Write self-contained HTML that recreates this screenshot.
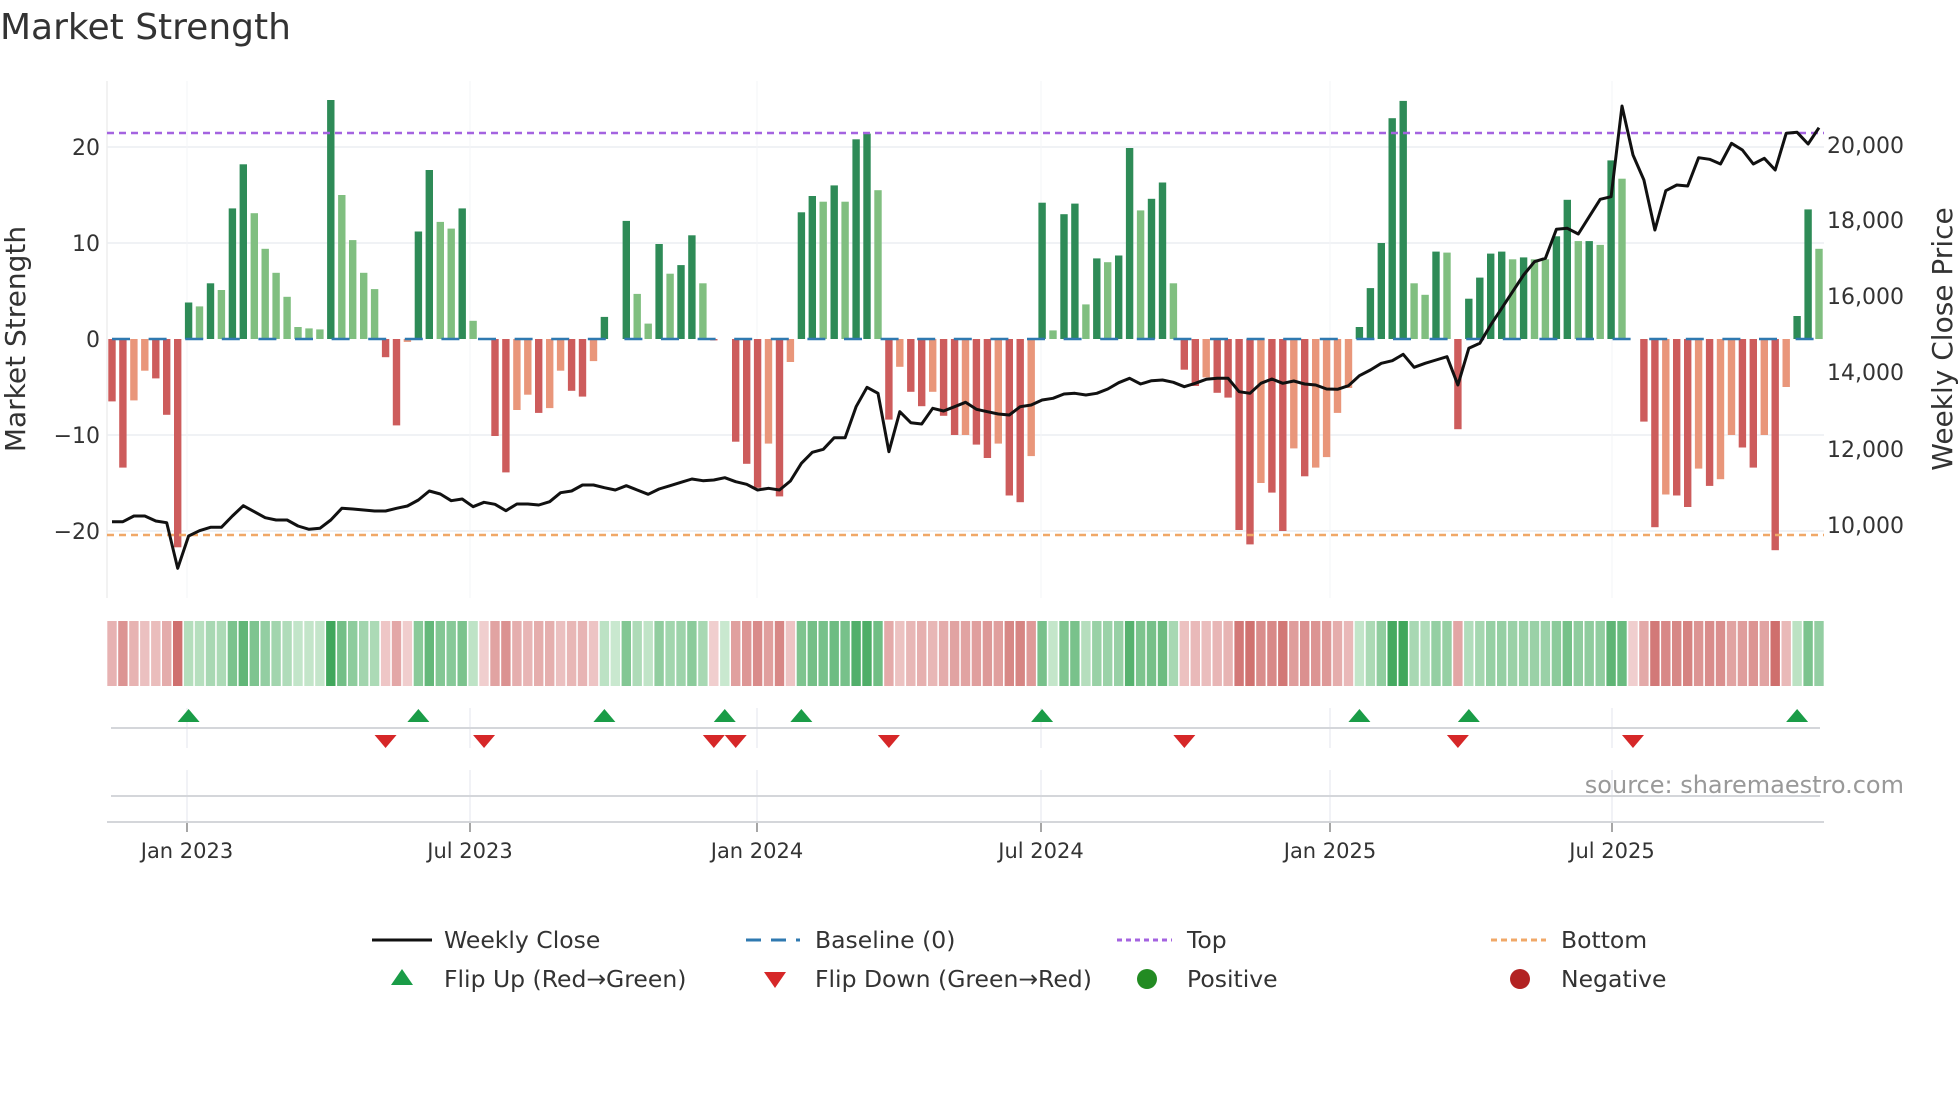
<!DOCTYPE html>
<html><head><meta charset="utf-8"><style>
html,body{margin:0;padding:0;background:#fff;width:1960px;height:1102px;overflow:hidden}
svg{display:block;font-family:"DejaVu Sans","Liberation Sans",sans-serif}
</style></head><body>
<svg id="s" width="1960" height="1102" viewBox="0 0 1960 1102" xmlns="http://www.w3.org/2000/svg">
<text x="0" y="39" font-size="36" fill="#333">Market Strength</text>
<g id="g"></g>
<text x="1904" y="793" font-size="24" fill="#999" text-anchor="end">source: sharemaestro.com</text>
<g font-size="21" fill="#333" text-anchor="middle">
<text x="187" y="858">Jan 2023</text><text x="470" y="858">Jul 2023</text><text x="757" y="858">Jan 2024</text>
<text x="1041" y="858">Jul 2024</text><text x="1330" y="858">Jan 2025</text><text x="1612" y="858">Jul 2025</text>
</g>
<g font-size="22" fill="#333" text-anchor="end">
<text x="100" y="155">20</text><text x="100" y="251">10</text><text x="100" y="347">0</text>
<text x="100" y="443">−10</text><text x="100" y="539">−20</text>
</g>
<g font-size="22" fill="#333">
<text x="1827" y="153">20,000</text><text x="1827" y="228">18,000</text><text x="1827" y="304">16,000</text>
<text x="1827" y="380">14,000</text><text x="1827" y="457">12,000</text><text x="1827" y="533">10,000</text>
</g>
<text transform="translate(25,339) rotate(-90)" font-size="28" fill="#333" text-anchor="middle">Market Strength</text>
<text transform="translate(1952,339) rotate(-90)" font-size="28" fill="#333" text-anchor="middle">Weekly Close Price</text>
<g font-size="23.5" fill="#333">
<line x1="372" y1="940" x2="432" y2="940" stroke="#111" stroke-width="3"/>
<text x="444" y="948">Weekly Close</text>
<line x1="746" y1="940" x2="800" y2="940" stroke="#2f79b0" stroke-width="3" stroke-dasharray="15,10"/>
<text x="815" y="948">Baseline (0)</text>
<line x1="1117" y1="940" x2="1172" y2="940" stroke="#a463e0" stroke-width="3" stroke-dasharray="5,4"/>
<text x="1187" y="948">Top</text>
<line x1="1491" y1="940" x2="1546" y2="940" stroke="#f0a868" stroke-width="3" stroke-dasharray="6,4"/>
<text x="1561" y="948">Bottom</text>
<polygon points="402,969 413,985 391,985" fill="#1a9c47"/>
<text x="444" y="987">Flip Up (Red→Green)</text>
<polygon points="764,972 786,972 775,988" fill="#d62728"/>
<text x="815" y="987">Flip Down (Green→Red)</text>
<circle cx="1147" cy="979" r="10" fill="#228b22"/>
<text x="1187" y="987">Positive</text>
<circle cx="1520" cy="979" r="10" fill="#b22222"/>
<text x="1561" y="987">Negative</text>
</g>
</svg>
<script>
var raw="-6.5 -13.4 -6.4L -3.3L -4.1 -7.9 -21.7 3.8 3.4L 5.8 5.1L 13.6 18.2 13.1L 9.4L 6.9L 4.4L 1.25L 1.1L 1.0L 24.9 15L 10.3L 6.9L 5.2L -1.9 -9 -0.3L 11.2 17.6 12.2L 11.5L 13.6 1.9L 0 -10.1 -13.9 -7.4L -5.8L -7.7 -7.2L -3.3L -5.4 -6 -2.3L 2.3 0 12.3 4.7L 1.6L 9.9 6.8L 7.7 10.8 5.8L -0.15 0 -10.7 -13 -15.5 -10.9L -16.4 -2.4L 13.2 14.9 14.3L 16 14.3L 20.8 21.4 15.5L -8.4 -2.9L -5.5 -7 -5.5L -8 -10 -10L -11 -12.4 -10.9L -16.3 -17 -12.2L 14.2 0.9L 13 14.1 3.6L 8.4 8L 8.7 19.9 13.4L 14.6 16.3 5.8L -3.2 -4.9 -4L -5.6 -6.1 -19.9 -21.4 -15L -16 -20 -11.4L -14.3 -13.4L -12.3L -7.7L -5.1L 1.25 5.3 10 23 24.8 5.8L 4.6L 9.1 9L -9.4 4.2 6.4 8.9 9.1 8.3L 8.5 8.3L 8.3L 10.7 14.5 10.2L 10.2 9.8L 18.6 16.7L 0 -8.6 -19.6 -16.2L -16.3 -17.5 -13.5L -15.3 -14.6L -10L -11.3 -13.4 -10L -22 -5L 2.4 13.5 9.4L".split(" ");
var ln=[1295,1295,1278,1278,1293,1298,1435,1338,1322,1312,1312,1278,1247,1265,1283,1290,1290,1308,1318,1315,1290,1255,1257,1260,1263,1263,1255,1248,1230,1203,1212,1232,1227,1250,1237,1243,1262,1242,1242,1245,1235,
1208,1203,1185,1185,1193,1200,1187,1200,1213,1197,1187,1177,1167,1172,1170,1163,1175,1183,1200,1195,1200,1173,1120,1087,1078,1043,1043,950,892,910,1085,965,998,1002,955,963,950,937,958,
965,972,975,950,945,930,925,912,910,915,910,897,878,865,882,872,870,877,890,880,868,865,865,905,910,880,867,880,873,882,885,897,898,887,857,840,820,812,
793,832,820,810,800,885,775,760,705,655,605,555,515,505,418,415,432,380,328,320,48,195,270,420,302,285,288,203,208,222,160,180,222,205,240,130,127,162,113];
var ups=[7,28,45,56,63,85,114,124,154],downs=[25,34,55,57,71,98,123,139];
var N=raw.length,x0=112,dx=(1819-112)/(N-1),Z=339,U=9.6;
function X(i){return x0+dx*i}
var h='';
[147,243,435,531].forEach(function(y){h+='<line x1="107" y1="'+y+'" x2="1824" y2="'+y+'" stroke="#eceef2" stroke-width="1.5"/>'});
[187,470,757,1041,1330,1612].forEach(function(x){h+='<line x1="'+x+'" y1="81" x2="'+x+'" y2="598" stroke="#f3f4f7" stroke-width="1"/>';
 h+='<line x1="'+x+'" y1="708" x2="'+x+'" y2="748" stroke="#eceef3" stroke-width="1.5"/><line x1="'+x+'" y1="770" x2="'+x+'" y2="822" stroke="#eceef3" stroke-width="1.5"/><line x1="'+x+'" y1="822" x2="'+x+'" y2="832" stroke="#888" stroke-width="1.5"/>'});
h+='<line x1="107" y1="81" x2="107" y2="598" stroke="#eeeeee" stroke-width="1.5"/>';
var vals=[];
raw.forEach(function(t,i){var L=t.slice(-1)=='L';var v=parseFloat(t);vals.push(v);if(v==0)return;
 var c=v>0?(L?'#80bf80':'#2e8b57'):(L?'#e9967a':'#cd5c5c');
 var y1=v>0?Z-v*U:Z, hh=Math.abs(v)*U;
 h+='<rect x="'+(X(i)-3.7).toFixed(1)+'" y="'+y1.toFixed(1)+'" width="7.4" height="'+hh.toFixed(1)+'" fill="'+c+'"/>'});
h+='<line x1="107" y1="133" x2="1824" y2="133" stroke="#a463e0" stroke-width="2.5" stroke-dasharray="7,5"/>';
h+='<line x1="107" y1="535" x2="1824" y2="535" stroke="#f0a868" stroke-width="2.5" stroke-dasharray="7,5"/>';
h+='<line x1="112" y1="339" x2="1824" y2="339" stroke="#2f79b0" stroke-width="2.5" stroke-dasharray="18,18.6"/>';
var p=ln.map(function(z,i){return X(i).toFixed(1)+','+(90+z/3).toFixed(1)}).join(' ');
h+='<polyline points="'+p+'" fill="none" stroke="#111" stroke-width="3" stroke-linejoin="round"/>';
var st=[],s=-1;
for(var i=0;i<N;i++){if(ups.indexOf(i)>=0)s=1;if(downs.indexOf(i)>=0)s=-1;st.push(s)}
function mix(a,b,t){return 'rgb('+a.map(function(v,k){return Math.round(v+(b[k]-v)*t)}).join(',')+')'}
for(var i=0;i<N;i++){var t=Math.min(1,Math.abs(vals[i])/24);t=0.12+0.8*t;
 var c=st[i]>0?mix([222,242,224],[50,160,80],t):mix([246,222,222],[200,92,90],t);
 h+='<rect x="'+(X(i)-4.7).toFixed(1)+'" y="621" width="9.4" height="65" fill="'+c+'"/>'}
h+='<line x1="111" y1="728" x2="1820" y2="728" stroke="#d4d6da" stroke-width="2"/>';
h+='<line x1="111" y1="796" x2="1820" y2="796" stroke="#d4d6da" stroke-width="2"/>';
h+='<line x1="107" y1="822" x2="1824" y2="822" stroke="#d4d6da" stroke-width="2"/>';
ups.forEach(function(i){var x=X(i);h+='<polygon points="'+x+',709 '+(x+11)+',722 '+(x-11)+',722" fill="#1a9c47"/>'});
downs.forEach(function(i){var x=X(i);h+='<polygon points="'+(x-11)+',735 '+(x+11)+',735 '+x+',748" fill="#d62728"/>'});
document.getElementById('g').innerHTML=h;
</script>
</body></html>
